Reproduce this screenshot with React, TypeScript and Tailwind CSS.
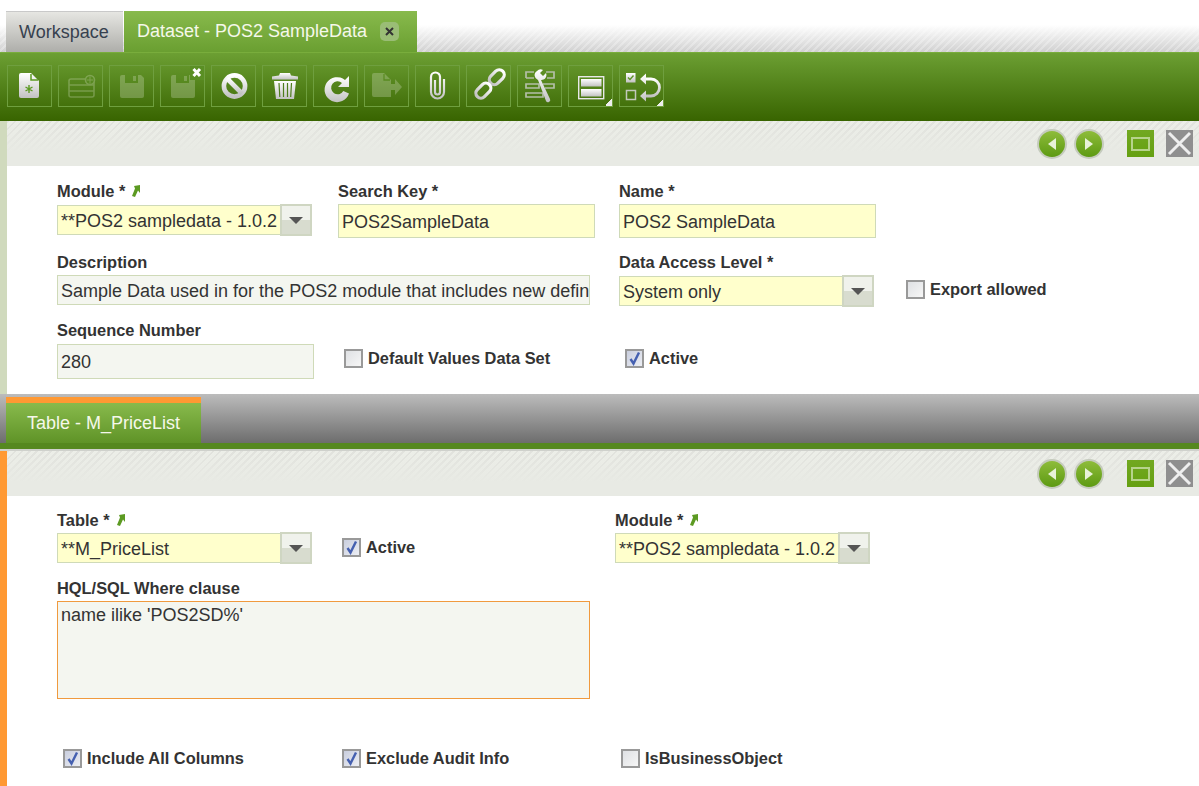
import type { ReactNode } from 'react'

const icons: ReactNode[] = [
  // new document
  <g key="new">
    <path d="M14 8h10l8 8v15a2 2 0 0 1-2 2H14a2 2 0 0 1-2-2V10a2 2 0 0 1 2-2z" fill="url(#ig)" />
    <path d="M24 9v6h7" fill="none" stroke="#5c9a22" strokeWidth="1.5" />
    <path d="M22 20v8M18.5 22l7 4M25.5 22l-7 4" stroke="#5c9a22" strokeWidth="1.4" />
  </g>,
  // new record (disabled)
  <g key="rec" opacity="0.28" fill="none" stroke="#dfe8d0" strokeWidth="1.6">
    <rect x="11" y="14" width="25" height="18" rx="2" />
    <path d="M11 20h25M11 26h25" />
    <circle cx="32" cy="15" r="4.5" fill="#5d9226" />
    <path d="M32 11.5v7M29 15h6" strokeWidth="1" />
  </g>,
  // save
  <g key="save" opacity="0.28">
    <path d="M13 10h19l3 3v18a2 2 0 0 1-2 2H13a2 2 0 0 1-2-2V12a2 2 0 0 1 2-2z" fill="#dfe8d0" />
    <rect x="16" y="10" width="13" height="8" fill="#5d9226" />
    <rect x="24" y="11" width="3" height="5" fill="#dfe8d0" />
  </g>,
  // save and close
  <g key="savex">
    <g opacity="0.28">
      <path d="M13 10h19l3 3v18a2 2 0 0 1-2 2H13a2 2 0 0 1-2-2V12a2 2 0 0 1 2-2z" fill="#dfe8d0" />
      <rect x="16" y="10" width="13" height="8" fill="#5d9226" />
      <rect x="24" y="11" width="3" height="5" fill="#dfe8d0" />
    </g>
    <rect x="30" y="1" width="14" height="14" fill="#5a8f24" />
    <path d="M33.500 4l6.500 7M40 4l-6.500 7" stroke="#fff" strokeWidth="3" />
  </g>,
  // undo
  <g key="ban" fill="none" stroke="url(#ig)" strokeWidth="4.6">
    <circle cx="23.5" cy="21" r="10.6" />
    <path d="M16 13.5l15 15" />
  </g>,
  // delete
  <g key="trash">
    <path d="M10 11.500l7-1 1-2.500h10l1 2.500 7 1v3H10z" fill="url(#ig)" />
    <path d="M12 16h22l-2 18H14z" fill="url(#ig)" />
    <path d="M17 18l.8 14M21.500 18v14M25.500 18v14M29.500 18l-.8 14" stroke="#4d7d1c" strokeWidth="1.2" />
  </g>,
  // refresh
  <path
    key="refresh"
    d="M36 11v11H25l4-4a6.500 6.500 0 1 0 1.300 8l5.700 2.400A12.500 12.500 0 1 1 32 15z"
    fill="url(#ig)"
  />,
  // export (disabled)
  <g key="export" opacity="0.28" fill="#dfe8d0">
    <path d="M10 8h10l7 7v17H10a2 2 0 0 1-2-2V10a2 2 0 0 1 2-2z" />
    <path d="M27 19h4v-5l7 8-7 8v-5h-4z" />
    <path d="M20 9v6h6" fill="none" stroke="#5d9226" strokeWidth="1.3" />
  </g>,
  // attachments
  <path
    key="clip"
    d="M29 14v13a6.500 6.500 0 0 1-13 0V12a4.500 4.500 0 0 1 9 0v15a2.500 2.500 0 0 1-5 0V15"
    fill="none"
    stroke="url(#ig)"
    strokeWidth="2.2"
  />,
  // link
  <g key="link" fill="none" stroke="url(#ig)" strokeWidth="3.2">
    <rect x="24" y="3" width="10" height="17" rx="5" transform="rotate(45 29 14)" />
    <rect x="12" y="17" width="10" height="17" rx="5" transform="rotate(45 17 26)" />
  </g>,
  // tree / grid config
  <g key="wrench">
    <g fill="none" stroke="#b4bfa8" strokeWidth="1.7">
      <path d="M9 13V7h8M29 7h8v6h-7M9 13h8M9 19h13v4H9zM26 19h11v4h-9M9 28h17v4H9z" />
    </g>
    <path
      d="M20 6a5 5 0 0 1 6-1l-3 3 3 3 3-3a5 5 0 0 1-5 7l9 19a2 2 0 0 1-4 2L21 15a5 5 0 0 1-1-9z"
      fill="url(#ig)"
    />
  </g>,
  // layout toggle
  <g key="layout">
    <rect x="10.700" y="11.700" width="25" height="22" fill="none" stroke="#e8e8e8" strokeWidth="1.4" />
    <rect x="13" y="14" width="20.500" height="7.500" fill="url(#ig)" />
    <rect x="13" y="24" width="20.500" height="7.500" fill="url(#ig)" />
  </g>,
  // status toggle
  <g key="toggle">
    <rect x="7" y="8" width="9.500" height="9.500" fill="url(#ig)" />
    <path d="M9 12.500l2 2 3.500-4" fill="none" stroke="#5d9226" strokeWidth="1.4" />
    <rect x="7.500" y="25.500" width="9" height="9" fill="none" stroke="#c3c9bd" strokeWidth="1.5" />
    <path d="M25 14h7a8.500 8.500 0 0 1 0 17h-7" fill="none" stroke="url(#ig)" strokeWidth="2.8" />
    <path d="M27 8.500v11l-6-5.500zM27 25.500v11l-6-5.500z" fill="url(#ig)" />
  </g>,
]

function Toolbar() {
  return (
    <div className="h-[69px] border-t border-[#79ad3c] bg-[linear-gradient(#6c9f33,#386400)] flex gap-[6px] pl-[7px] pt-[12px]">
      {icons.map((icon, i) => (
        <div key={i} className="relative w-[45px] h-[42px] border border-[#6f9f3f]">
          <svg viewBox="0 0 45 42" className="absolute -left-px -top-px w-[45px] h-[42px]">
            {icon}
          </svg>
          {(i === 11 || i === 12) && (
            <span className="absolute right-0 bottom-0 w-[7px] h-[7px] bg-[linear-gradient(135deg,transparent_50%,#eeeeee_50%)]" />
          )}
        </div>
      ))}
    </div>
  )
}

function NavRound({ right }: { right?: boolean }) {
  return (
    <div className="w-[30px] h-[30px] rounded-full border-2 border-[#c5cbbd] bg-[linear-gradient(#8ebc3b,#5d9a12)] flex items-center justify-center">
      <svg width="10" height="12" viewBox="0 0 10 12">
        <path d={right ? 'M1 0l8 6-8 6z' : 'M9 0L1 6l8 6z'} fill="#e8f2d8" />
      </svg>
    </div>
  )
}

function PanelHeader() {
  return (
    <div className="h-[45px] bg-[linear-gradient(#e8eae400,#e8eae4_70%),repeating-linear-gradient(135deg,#e1e2dd_0px,#e1e2dd_2px,#eceee8_2px,#eceee8_5px)] flex items-center pr-[6px] justify-end">
      <div className="flex items-center gap-[7px] mr-[23px]">
        <NavRound />
        <NavRound right />
      </div>
      <div className="w-[27px] h-[27px] bg-[linear-gradient(#72a821,#65a012)] flex items-center justify-center mr-[12px]">
        <div className="w-[19px] h-[14px] border-2 border-[#b7d38c]" />
      </div>
      <div className="w-[27px] h-[27px] bg-[#8f8f8f]">
        <svg viewBox="0 0 27 27" className="w-[27px] h-[27px]">
          <path d="M3 3l21 21M24 3L3 24" stroke="#eee" strokeWidth="3" />
        </svg>
      </div>
    </div>
  )
}

function Label({ text, link }: { text: string; link?: boolean }) {
  return (
    <div className="h-[18px] flex items-center gap-[5px] text-[16.4px] leading-[18px] font-bold text-[#333]">
      <span>{text}</span>
      {link && (
        <svg width="10" height="12" viewBox="0 0 10 12">
          <path d="M4 1l6-1v8L8 5.500 5 12 2 11l3-7.500z" fill="#5c9a22" />
        </svg>
      )}
    </div>
  )
}

function Input({
  value,
  w,
  h,
  lead,
  required,
}: {
  value: string
  w: string
  h: string
  lead: string
  required?: boolean
}) {
  return (
    <div
      className={`${w} ${h} ${lead} border border-[#cfdab8] px-[3px] overflow-hidden whitespace-nowrap text-[18px] text-[#333] ${
        required ? 'bg-[#ffffcc]' : 'bg-[#f4f6f0]'
      }`}
    >
      {value}
    </div>
  )
}

function Combo({ value, w }: { value: string; w: string }) {
  return (
    <div className={`${w} h-[32px] flex items-center text-[18px] text-[#333]`}>
      <div className="flex-1 min-w-0 h-[30px] border border-r-0 border-[#cfdab8] bg-[#ffffcc] pl-[3px] pt-[2px] flex items-center whitespace-nowrap overflow-hidden">
        {value}
      </div>
      <div className="w-[32px] h-[32px] border-2 border-[#cfd6c2] bg-[linear-gradient(#f0f2ec_50%,#d8dccf_50%)] flex items-center justify-center">
        <div className="w-0 h-0 border-x-[7px] border-x-transparent border-t-[7px] border-t-[#555]" />
      </div>
    </div>
  )
}

function Check({ label, checked, className }: { label: string; checked?: boolean; className?: string }) {
  return (
    <div className={`flex items-center gap-[5px] text-[16.4px] leading-[20px] font-bold text-[#333] ${className ?? ''}`}>
      <div
        className={`w-[19px] h-[19px] border-2 border-[#999999] ${
          checked ? 'bg-[linear-gradient(135deg,#c9cede,#eceef4)]' : 'bg-[linear-gradient(135deg,#dfe1e4,#f6f6f6)]'
        }`}
      >
        {checked && (
          <svg viewBox="0 0 15 15" className="w-[15px] h-[15px]">
            <path d="M3.500 8l3 4.500L12 1.500" fill="none" stroke="#4560b0" strokeWidth="2.400" />
          </svg>
        )}
      </div>
      <span>{label}</span>
    </div>
  )
}

export default function App() {
  return (
    <div className="w-[1199px] h-[786px] overflow-hidden bg-white font-['Liberation_Sans',Arial,sans-serif]">
      <svg className="absolute w-0 h-0">
        <defs>
          <linearGradient id="ig" x1="0" y1="0" x2="0" y2="1">
            <stop offset="0" stopColor="#ffffff" />
            <stop offset="1" stopColor="#c2c2c2" />
          </linearGradient>
        </defs>
      </svg>

      {/* top tabs */}
      <div className="h-[52px] pt-[11px] pl-[6px] flex items-end bg-[repeating-linear-gradient(135deg,#ffffff44_0px,#ffffff44_2px,#ffffff00_2px,#ffffff00_5px),linear-gradient(#ffffff_48%,#d0d0d0_100%)]">
        <div className="w-[117px] h-[41px] border-t border-[#c9c9c9] bg-[linear-gradient(#e6e6e2,#aeaeaa)] flex items-center pl-[13px] text-[18px] text-[#37414f]">
          Workspace
        </div>
        <div className="ml-px w-[293px] h-[41px] bg-[linear-gradient(#88ba4c,#6a9f31)] flex items-center pl-[13px] text-[18px] text-[#f5f8ea]">
          <span>Dataset - POS2 SampleData</span>
          <span className="ml-[13px] w-[19px] h-[19px] rounded-[5px] bg-[#9abd76] flex items-center justify-center">
            <svg width="9" height="9" viewBox="0 0 9 9">
              <path d="M1 1l7 7M8 1L1 8" stroke="#333" strokeWidth="2" />
            </svg>
          </span>
        </div>
      </div>

      <Toolbar />

      {/* header section */}
      <div className="h-[273px] border-l-[7px] border-[#d0dabd]">
        <PanelHeader />
        <div className="pl-[50px]">
          <div className="pt-[16px] flex">
            <div className="w-[281px]">
              <Label text="Module *" link />
              <div className="mt-[4px]">
                <Combo value="**POS2 sampledata - 1.0.2" w="w-[255px]" />
              </div>
            </div>
            <div className="w-[281px]">
              <Label text="Search Key *" />
              <div className="mt-[4px]">
                <Input value="POS2SampleData" w="w-[257px]" h="h-[34px]" lead="leading-[34px]" required />
              </div>
            </div>
            <div>
              <Label text="Name *" />
              <div className="mt-[4px]">
                <Input value="POS2 SampleData" w="w-[257px]" h="h-[34px]" lead="leading-[34px]" required />
              </div>
            </div>
          </div>

          <div className="pt-[15px] flex">
            <div className="w-[562px]">
              <Label text="Description" />
              <div className="mt-[4px]">
                <Input
                  value="Sample Data used in for the POS2 module that includes new definitions"
                  w="w-[533px]"
                  h="h-[30px]"
                  lead="leading-[30px]"
                />
              </div>
            </div>
            <div className="w-[287px]">
              <Label text="Data Access Level *" />
              <div className="mt-[4px]">
                <Combo value="System only" w="w-[255px]" />
              </div>
            </div>
            <Check label="Export allowed" className="mt-[26px] self-start" />
          </div>

          <div className="pt-[14px] flex">
            <div className="w-[287px]">
              <Label text="Sequence Number" />
              <div className="mt-[5px]">
                <Input value="280" w="w-[257px]" h="h-[35px]" lead="leading-[35px]" />
              </div>
            </div>
            <Check label="Default Values Data Set" className="w-[281px] mt-[27px] self-start" />
            <Check label="Active" checked className="mt-[27px] self-start" />
          </div>
        </div>
      </div>

      {/* child tab strip */}
      <div className="h-[49px] pt-[3px] pl-[6px] bg-[linear-gradient(#bcbcbc,#6d6d6d)]">
        <div className="w-[195px] h-[46px] border-t-[6px] border-[#ff9933] bg-[linear-gradient(#88ba4c,#5f9327)] flex items-center pl-[21px] text-[18px] text-[#f5f8ea]">
          Table - M_PriceList
        </div>
      </div>
      <div className="h-[6px] bg-[#55881f]" />
      <div className="h-[2px] bg-[#cfd1cc]" />

      {/* child section */}
      <div className="h-[335px] border-l-[7px] border-[#ff9933]">
        <PanelHeader />
        <div className="pl-[50px]">
          <div className="pt-[15px] flex">
            <div className="w-[285px]">
              <Label text="Table *" link />
              <div className="mt-[3px]">
                <Combo value="**M_PriceList" w="w-[255px]" />
              </div>
            </div>
            <Check label="Active" checked className="w-[273px] mt-[26px] self-start" />
            <div>
              <Label text="Module *" link />
              <div className="mt-[3px]">
                <Combo value="**POS2 sampledata - 1.0.2" w="w-[255px]" />
              </div>
            </div>
          </div>

          <div className="pt-[15px]">
            <Label text="HQL/SQL Where clause" />
            <div className="mt-[4px] w-[533px] h-[98px] border border-[#f09a3e] bg-[#f4f6f0] px-[3px] text-[18px] leading-[26px] text-[#333]">
              name ilike 'POS2SD%'
            </div>
          </div>

          <div className="pt-[49px] pl-[6px] flex">
            <Check label="Include All Columns" checked className="w-[279px]" />
            <Check label="Exclude Audit Info" checked className="w-[279px]" />
            <Check label="IsBusinessObject" />
          </div>
        </div>
      </div>
    </div>
  )
}
